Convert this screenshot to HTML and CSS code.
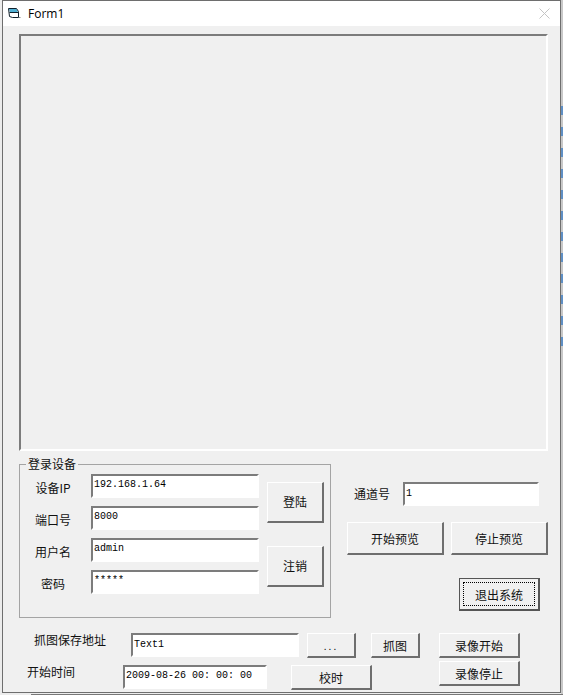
FILE: index.html
```html
<!DOCTYPE html>
<html lang="zh-CN">
<head>
    <meta charset="UTF-8">
    <title>Form1</title>
    <link rel="stylesheet" href="styles.css">
</head>
<body>

<div class="window">

    <!-- Title bar -->
    <div class="titlebar">
        <svg class="form-icon" width="14" height="15" viewBox="0 0 14 15">
            <path d="M0.5 2.5 H8.5 L10.5 5.5 V11.5 L4.5 13.5 L1.5 10.5 Z" fill="#fff"/>
            <path d="M1 3 H8.5 L10 6 L2 6 Z" fill="#4fb0d4"/>
            <path d="M0.5 2.5 H8.5 L10.5 5.5 V11.5 H4.5 L1.5 10.5 Z M1.5 6.5 H10" fill="none" stroke="#10202c" stroke-width="1"/>
            <path d="M11 11.5 H12.5" stroke="#888" stroke-width="1"/>
        </svg>
        <span class="title-text">Form1</span>
        <svg class="close-icon" width="11" height="11" viewBox="0 0 11 11">
            <path d="M0.5 0.5 L10.5 10.5 M10.5 0.5 L0.5 10.5" stroke="#c4c4c4" stroke-width="1"/>
        </svg>
    </div>

    <div class="client">
        <div class="picture sunken"></div>

        <div class="middle">
            <fieldset class="group">
                <legend>登录设备</legend>
                <div class="login-grid">
                    <label class="field-label">设备IP</label>
                    <div class="input sunken">192.168.1.64</div>
                    <button class="btn login-btn" type="button">登陆</button>

                    <label class="field-label">端口号</label>
                    <div class="input sunken">8000</div>

                    <label class="field-label">用户名</label>
                    <div class="input sunken">admin</div>
                    <button class="btn login-btn" type="button">注销</button>

                    <label class="field-label">密码</label>
                    <div class="input sunken">*****</div>
                </div>
            </fieldset>

            <div class="side">
                <div class="channel-row">
                    <label class="channel-label">通道号</label>
                    <div class="input sunken channel-input">1</div>
                </div>
                <div class="preview-row">
                    <button class="btn preview-btn" type="button">开始预览</button>
                    <button class="btn preview-btn" type="button">停止预览</button>
                </div>
                <button class="btn exit-btn" type="button"><span>退出系统</span></button>
            </div>
        </div>

        <div class="bottom">
            <div class="bottom-left">
                <div class="capture-row">
                    <label class="path-label">抓图保存地址</label>
                    <div class="input sunken path-input">Text1</div>
                    <button class="btn browse-btn" type="button">...</button>
                    <button class="btn snap-btn" type="button">抓图</button>
                </div>
                <div class="time-row">
                    <label class="time-label">开始时间</label>
                    <div class="input sunken time-input">2009-08-26 00: 00: 00</div>
                    <button class="btn sync-btn" type="button">校时</button>
                </div>
            </div>
            <div class="record-col">
                <button class="btn record-btn" type="button">录像开始</button>
                <button class="btn record-btn" type="button">录像停止</button>
            </div>
        </div>
    </div>
</div>

</body>
</html>
```

FILE: styles.css
```css
/* General */
html, body {
    margin: 0;
    padding: 0;
    height: 695px;
    overflow: hidden;
}

/* Backdrop: what peeks out from behind the window */
body {
    background:
        repeating-linear-gradient(to bottom, #5f8fc4 0 9px, transparent 9px 21px) right 106px / 2px 240px no-repeat,
        linear-gradient(#777, #777) 31px 694px / 532px 1px no-repeat,
        linear-gradient(#c8c8c8, #c8c8c8) right top / 2px 100% no-repeat,
        #ececec;
    font-family: "Noto Sans CJK SC", "Liberation Sans", sans-serif;
    font-size: 12px;
    color: #111;
}

/* Window frame */
.window {
    width: 557px;
    height: 691px;
    margin-left: 2px;
    border: 1px solid #6e6e6e;
    background: #f0f0f0;
}

.titlebar {
    display: flex;
    align-items: center;
    height: 25px;
    padding: 0 10px 0 5px;
    background: #fff;
}

.form-icon {
    flex: none;
}

.title-text {
    margin-left: 6px;
    font-family: "Open Sans", sans-serif;
    font-size: 12px;
    color: #000;
}

.close-icon {
    margin-left: auto;
    flex: none;
}

/* Client area */
.client {
    padding: 8px 0 0 16px;
}

.sunken {
    box-sizing: border-box;
    background: #fff;
    border-style: solid;
    border-width: 2px;
    border-color: #7c7c7c #fff #fff #7c7c7c;
}

.picture {
    width: 529px;
    height: 417px;
    background: #f0f0f0;
}

.middle {
    display: flex;
    margin-top: 5px;
}

/* Login group */
.group {
    box-sizing: border-box;
    width: 312px;
    height: 162px;
    margin: 0;
    padding: 2px 0 0 0;
    border: 1px solid #a4a4a4;
}

.group legend {
    margin-left: 6px;
    padding: 0 2px;
    font-size: 12px;
    line-height: 16px;
}

.login-grid {
    display: grid;
    grid-template-columns: 63px 168px 57px;
    grid-template-rows: repeat(4, 24px);
    row-gap: 8px;
    column-gap: 8px;
}

.field-label {
    padding: 4px 0 0 15px;
    margin-right: -12px;
    text-align: center;
    line-height: 20px;
    width: 36px;
}

.login-btn {
    grid-row: span 2;
    align-self: center;
    height: 41px;
}

.input {
    padding: 1px 0 0 1px;
    font-family: "Liberation Mono", monospace;
    font-size: 10px;
    line-height: 15px;
    color: #000;
    white-space: nowrap;
    overflow: hidden;
}

/* Buttons */
.btn {
    box-sizing: border-box;
    padding: 0;
    font-family: inherit;
    font-size: 12px;
    color: #111;
    background: #f0f0f0;
    border-style: solid;
    border-width: 1px 2px 2px 1px;
    border-color: #fff #6e6e6e #6e6e6e #fff;
}

/* Right side of the login group */
.side {
    margin-left: 16px;
    width: 202px;
    padding-top: 26px;
}

.channel-row {
    display: flex;
    align-items: center;
}

.channel-label {
    margin-left: 7px;
    width: 49px;
    line-height: 14px;
}

.channel-input {
    width: 136px;
    height: 24px;
    padding-top: 2px;
}

.preview-row {
    display: flex;
    gap: 7px;
    margin-top: 16px;
}

.preview-btn {
    width: 97px;
    height: 33px;
}

.exit-btn {
    display: block;
    width: 81px;
    height: 33px;
    margin: 23px 0 0 112px;
    padding: 3px;
    border: 1px solid #555;
    border-right-width: 2px;
    border-bottom-width: 2px;
}

.exit-btn span {
    display: flex;
    align-items: center;
    justify-content: center;
    height: 100%;
    border: 1px dotted #000;
    box-sizing: border-box;
}

/* Bottom rows */
.bottom {
    display: flex;
    margin-top: 15px;
}

.bottom-left {
    width: 420px;
}

.capture-row {
    display: flex;
    height: 24px;
}

.path-label {
    margin-left: 15px;
    width: 97px;
    line-height: 14px;
}

.path-input {
    width: 168px;
    height: 24px;
    padding-top: 2px;
}

.browse-btn {
    width: 49px;
    height: 25px;
    margin-left: 8px;
    letter-spacing: 2px;
    font-size: 10px;
}

.snap-btn {
    width: 49px;
    height: 25px;
    margin-left: 15px;
}

.time-row {
    display: flex;
    margin-top: 8px;
}

.time-label {
    margin-left: 8px;
    width: 96px;
    line-height: 14px;
}

.time-input {
    width: 144px;
    height: 24px;
    padding-top: 1px;
}

.sync-btn {
    width: 81px;
    height: 25px;
    margin-left: 24px;
}

.record-col {
    display: flex;
    flex-direction: column;
    gap: 3px;
}

.record-btn {
    width: 81px;
    height: 25px;
}
```
